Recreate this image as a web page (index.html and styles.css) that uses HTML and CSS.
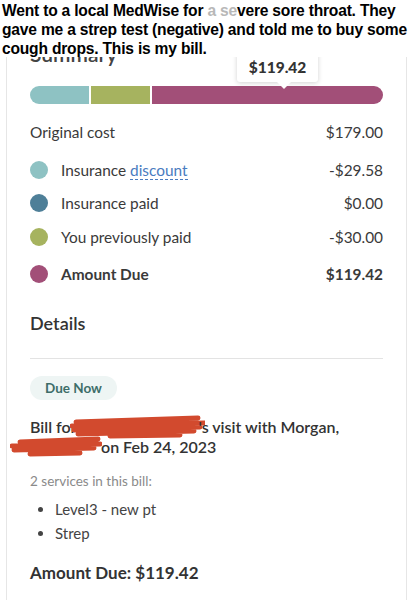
FILE: index.html
```html
<!DOCTYPE html>
<html>
<head>
<meta charset="utf-8">
<link rel="stylesheet" href="styles.css">
</head>
<body>
<div class="caption">Went to a local MedWise for <span class="smudge">a se</span>vere sore throat. They gave me a strep test (negative) and told me to buy some cough drops. This is my bill.</div>
<div class="shot">
  <div class="card">
    <h2 class="summary">Summary</h2>
    <div class="barwrap">
      <div class="tooltip">$119.42</div>
      <div class="bar">
        <div class="seg teal" style="width:59px"></div>
        <div class="seg green" style="width:59px"></div>
        <div class="seg plum"></div>
      </div>
    </div>
    <div class="row first"><span class="lbl">Original cost</span><span class="val">$179.00</span></div>
    <div class="row second"><span class="dot teal"></span><span class="lbl">Insurance <span class="link">discount</span></span><span class="val">-$29.58</span></div>
    <div class="row third"><span class="dot blue"></span><span class="lbl">Insurance paid</span><span class="val">$0.00</span></div>
    <div class="row"><span class="dot green"></span><span class="lbl">You previously paid</span><span class="val">-$30.00</span></div>
    <div class="row total"><span class="dot plum"></span><span class="lbl">Amount Due</span><span class="val">$119.42</span></div>
    <h2 class="details">Details</h2>
    <hr class="divider">
    <span class="pill">Due Now</span>
    <p class="bill">Bill for<span class="redact r1"><svg width="135" height="24" viewBox="0 0 135 24"><path d="M6 7 L128 3 M2 11 L134 8 M4 15 L130 12 M8 19 L124 16 M40 21 L110 20" stroke="#d24a2e" stroke-width="5" fill="none" stroke-linecap="round"/></svg></span>'s visit with Morgan,<br><span class="redact r2"><svg width="92" height="22" viewBox="0 0 92 22"><path d="M10 6 L88 3 M2 10 L90 8 M4 14 L84 12 M20 18 L70 17" stroke="#d24a2e" stroke-width="5" fill="none" stroke-linecap="round"/></svg></span>on Feb 24, 2023</p>
    <p class="services">2 services in this bill:</p>
    <ul class="list">
      <li>Level3 - new pt</li>
      <li>Strep</li>
    </ul>
    <h3 class="due">Amount Due: $119.42</h3>
  </div>
</div>
</body>
</html>
```
FILE: styles.css
```css
html, body { margin: 0; padding: 0; background: #fff; }
body { width: 413px; height: 600px; overflow: hidden; }
.caption {
  font-family: "Liberation Sans", Arial, sans-serif;
  font-weight: bold;
  font-size: 15.6px;
  line-height: 19px;
  color: #000;
  padding: 1px 0 0 2px;
  height: 56px;
  letter-spacing: -0.2px;
}
.smudge { color: #b8b8b8; }
.shot {
  margin: 0 6px;
  height: 543px;
  overflow: hidden;
  border-left: 1px solid #e6e6e6;
  border-right: 1px solid #e6e6e6;
}
.card {
  font-family: Lato, "Open Sans", sans-serif;
  color: #3a3a3a;
  padding: 0 23px;
  position: relative;
}
.summary {
  margin: -14px 0 0 0;
  font-size: 21px;
  font-weight: 600;
  color: #444;
  height: 22px;
  line-height: 22px;
}
.barwrap { position: relative; margin-top: 21px; }
.tooltip {
  position: absolute;
  left: 207px;
  top: -34px;
  width: 81px;
  height: 30px;
  background: #fff;
  box-shadow: 0 1px 5px rgba(0,0,0,0.18);
  border-radius: 3px;
  text-align: center;
  font-weight: 900;
  font-size: 15.5px;
  line-height: 30px;
  color: #333;
  z-index: 1;
}
.tooltip::after {
  content: "";
  position: absolute;
  left: 40px;
  bottom: -7px;
  border-left: 7px solid transparent;
  border-right: 7px solid transparent;
  border-top: 7px solid #fff;
}
.bar {
  display: flex;
  gap: 2px;
  height: 18px;
  border-radius: 9px;
  overflow: hidden;
}
.seg { height: 100%; }
.seg.plum { flex: 1; }
.teal { background: #8ec2c3; }
.green { background: #a6b35f; }
.plum { background: #a24f78; }
.blue { background: #4e7f98; }
.row {
  display: flex;
  align-items: center;
  font-size: 15.4px;
  height: 22px;
  margin-top: 12px;
}
.row.first { margin-top: 17px; }
.row.second { margin-top: 16px; }
.row.third { margin-top: 11px; }
.row.total { margin-top: 15px; font-weight: bold; }
.dot {
  width: 18px;
  height: 18px;
  border-radius: 50%;
  margin-right: 13px;
  flex: none;
}
.lbl { flex: 1; }
.val { text-align: right; }
.link {
  color: #4a7cc0;
  border-bottom: 1px dashed #4a7cc0;
}
.details {
  font-size: 18px;
  font-weight: 600;
  margin: 27px 0 0 0;
  line-height: 22px;
  color: #333;
}
.divider {
  border: 0;
  border-top: 1px solid #e3e3e3;
  margin: 24px 0 0 0;
}
.pill {
  display: inline-block;
  margin-top: 17px;
  background: #eef5f4;
  color: #3d6e69;
  font-weight: bold;
  font-size: 13.5px;
  line-height: 24px;
  padding: 0 15px;
  border-radius: 12px;
}
.bill {
  margin: 17px 0 0 0;
  font-size: 16px;
  font-weight: 600;
  line-height: 20px;
  color: #333;
}
.redact { display: inline-block; vertical-align: middle; margin: -7px 0; }
.r1 { margin-left: -6px; margin-right: -7px; }
.r2 { margin-left: -20px; margin-right: -1px; }
.services {
  margin: 16px 0 0 0;
  font-size: 13.5px;
  color: #8a8a8a;
}
.list {
  margin: 8px 0 0 0;
  padding-left: 25px;
  font-size: 15px;
  color: #444;
}
.list li { line-height: 24px; }
.list li::marker { font-size: 15px; }
.due {
  margin: 17px 0 0 0;
  font-size: 17px;
  font-weight: bold;
  color: #333;
}
```
